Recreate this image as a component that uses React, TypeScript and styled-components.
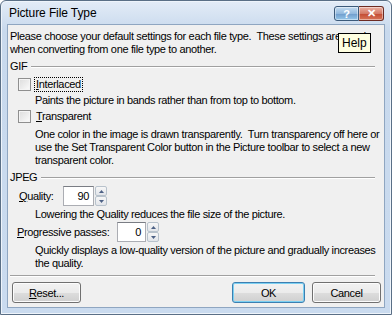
import React from "react";
import styled, { createGlobalStyle } from "styled-components";

const Global = createGlobalStyle`
  html, body { margin: 0; padding: 0; background: #fff; }
  body { font-family: "Liberation Sans", sans-serif; font-size: 11px; color: #000; letter-spacing: -0.35px; }
  * { box-sizing: border-box; }
`;

const Frame = styled.div`
  position: relative;
  width: 392px;
  height: 315px;
  display: flex;
  flex-direction: column;
  border: 1px solid #5a6f86;
  border-radius: 6px 6px 0 0;
  background: linear-gradient(#e3ecf7, #c8d9ed 30px, #cadbef);
  box-shadow: inset 0 0 0 1px #eef4fb;
  padding: 0 6px 6px 6px;
`;

const TitleBar = styled.div`
  height: 23px;
  display: flex;
  align-items: center;
  justify-content: space-between;
  padding-left: 2px;
`;

const Title = styled.span`
  font-family: "Liberation Sans", sans-serif;
  font-size: 12px;
  letter-spacing: -0.1px;
  color: #000;
`;

const TitleButtons = styled.div`
  display: flex;
  align-self: flex-start;
  margin-top: 5px;
  margin-right: 1px;
`;

const CapButton = styled.div<{ $close?: boolean }>`
  width: 25px;
  height: 15px;
  border: 1px solid ${(p) => (p.$close ? "#6d2b22" : "#3c5a7a")};
  border-radius: ${(p) => (p.$close ? "0 3px 3px 0" : "3px 0 0 3px")};
  background: ${(p) =>
    p.$close
      ? "linear-gradient(#eab0a2, #d47a66 50%, #c24a32 51%, #d87558)"
      : "linear-gradient(#c4dcf1, #93b9de 50%, #6e9bcb 51%, #96c7ea)"};
  box-shadow: inset 0 0 0 1px rgba(255, 255, 255, 0.45);
  display: flex;
  align-items: center;
  justify-content: center;
  color: #fff;
  font-family: "Liberation Sans", sans-serif;
  font-weight: bold;
  font-size: 11px;
  letter-spacing: 0;
  & + & { border-left: none; }
`;

const Client = styled.div`
  flex: 1;
  background: #f0f0f0;
  border: 1px solid #8fa6c1;
  padding: 5px 2px 0 2px;
  display: flex;
  flex-direction: column;
`;

const Intro = styled.p`
  margin: 0 0 4px 0;
  line-height: 13px;
  white-space: pre;
`;

const GroupHead = styled.div<{ $after?: number }>`
  display: flex;
  align-items: center;
  gap: 4px;
  height: 13px;
  margin-right: 7px;
  margin-bottom: ${(p) => p.$after ?? 0}px;
  &::after {
    content: "";
    flex: 1;
    border-top: 1px solid #a0a0a0;
    border-bottom: 1px solid #fff;
  }
`;

const Text = styled.span`
  line-height: 13px;
`;

const CheckRow = styled.div`
  display: flex;
  align-items: center;
  gap: 4px;
  padding-left: 8px;
  height: 18px;
`;

const Box = styled.span`
  width: 13px;
  height: 13px;
  border: 1px solid #8f8f8f;
  background: linear-gradient(135deg, #dcdcdc, #fbfbfb);
  box-shadow: inset 0 0 0 1px #f4f4f4;
`;

const Label = styled.span<{ $focus?: boolean }>`
  line-height: 13px;
  padding: 0 1px;
  outline: ${(p) => (p.$focus ? "1px dotted #000" : "none")};
`;

const Desc = styled.p<{ $top?: number; $gap?: number }>`
  margin: 0 7px 0 25px;
  padding: ${(p) => p.$top ?? 2}px 0 ${(p) => p.$gap ?? 2}px 0;
  line-height: 13px;
  white-space: pre;
`;

const FieldRow = styled.div<{ $indent: number; $top?: number }>`
  display: flex;
  align-items: center;
  padding-left: ${(p) => p.$indent}px;
  margin-top: ${(p) => p.$top ?? 0}px;
  height: 20px;
`;

const FieldLabel = styled.span<{ $w: number }>`
  width: ${(p) => p.$w}px;
`;

const Spin = styled.div`
  display: flex;
  height: 20px;
`;

const Input = styled.div<{ $w: number }>`
  width: ${(p) => p.$w}px;
  height: 20px;
  border: 1px solid #abadb3;
  border-top-color: #7a7d84;
  background: #fff;
  display: flex;
  align-items: center;
  justify-content: flex-end;
  padding-right: 4px;
`;

const Arrows = styled.div`
  width: 12px;
  display: flex;
  flex-direction: column;
  margin-left: 1px;
`;

const Arrow = styled.div`
  flex: 1;
  border: 1px solid #b8c2cc;
  border-radius: 2px;
  background: linear-gradient(#f7f7f7, #e2e5ea);
  display: flex;
  align-items: center;
  justify-content: center;
`;

const Separator = styled.div`
  margin: 0 7px 0 0;
  border-top: 1px solid #a0a0a0;
  border-bottom: 1px solid #fff;
`;

const Buttons = styled.div`
  display: flex;
  align-items: center;
  padding: 5px 1px 0 2px;
  gap: 7px;
`;

const Btn = styled.div<{ $default?: boolean }>`
  width: ${(p) => (p.$default ? "73px" : "69px")};
  height: 21px;
  border: 1px solid ${(p) => (p.$default ? "#3c7fb1" : "#707070")};
  border-radius: 3px;
  background: linear-gradient(#f2f2f2, #ebebeb 50%, #dddddd 51%, #cfcfcf);
  box-shadow: inset 0 0 0 1px ${(p) => (p.$default ? "#7bd0f2" : "#fcfcfc")};
  display: flex;
  align-items: center;
  justify-content: center;
`;

const Spacer = styled.div`
  flex: 1;
`;

const Tooltip = styled.div`
  position: absolute;
  left: 337px;
  top: 32px;
  padding: 2px 3px;
  background: #ffffe1;
  border: 1px solid #000;
  font-size: 12px;
  letter-spacing: 0;
  line-height: 14px;
`;

const Up = () => (
  <svg width="5" height="3" viewBox="0 0 5 3"><path d="M2.5 0 L5 3 L0 3 Z" fill="#4d6185" /></svg>
);
const Down = () => (
  <svg width="5" height="3" viewBox="0 0 5 3"><path d="M0 0 L5 0 L2.5 3 Z" fill="#4d6185" /></svg>
);

const Spinner = ({ w, value }: { w: number; value: string }) => (
  <Spin>
    <Input $w={w}>{value}</Input>
    <Arrows>
      <Arrow><Up /></Arrow>
      <Arrow><Down /></Arrow>
    </Arrows>
  </Spin>
);

export default function App() {
  return (
    <>
      <Global />
      <Frame>
        <TitleBar>
          <Title>Picture File Type</Title>
          <TitleButtons>
            <CapButton>?</CapButton>
            <CapButton $close>✕</CapButton>
          </TitleButtons>
        </TitleBar>
        <Client>
          <Intro>{"Please choose your default settings for each file type.  These settings are used\nwhen converting from one file type to another."}</Intro>
          <GroupHead $after={2}><Text>GIF</Text></GroupHead>
          <CheckRow>
            <Box />
            <Label $focus><u>I</u>nterlaced</Label>
          </CheckRow>
          <Desc $top={1} $gap={0}>Paints the picture in bands rather than from top to bottom.</Desc>
          <CheckRow>
            <Box />
            <Label><u>T</u>ransparent</Label>
          </CheckRow>
          <Desc $top={3} $gap={4}>{"One color in the image is drawn transparently.  Turn transparency off here or\nuse the Set Transparent Color button in the Picture toolbar to select a new\ntransparent color."}</Desc>
          <GroupHead><Text>JPEG</Text></GroupHead>
          <FieldRow $indent={9} $top={2}>
            <FieldLabel $w={44}><u>Q</u>uality:</FieldLabel>
            <Spinner w={31} value="90" />
          </FieldRow>
          <Desc $top={2} $gap={1}>Lowering the Quality reduces the file size of the picture.</Desc>
          <FieldRow $indent={7}>
            <FieldLabel $w={100}><u>P</u>rogressive passes:</FieldLabel>
            <Spinner w={29} value="0" />
          </FieldRow>
          <Desc $top={2} $gap={5}>{"Quickly displays a low-quality version of the picture and gradually increases\nthe quality."}</Desc>
          <Separator />
          <Buttons>
            <Btn><span><u>R</u>eset...</span></Btn>
            <Spacer />
            <Btn $default>OK</Btn>
            <Btn>Cancel</Btn>
          </Buttons>
        </Client>
        <Tooltip>Help</Tooltip>
      </Frame>
    </>
  );
}
